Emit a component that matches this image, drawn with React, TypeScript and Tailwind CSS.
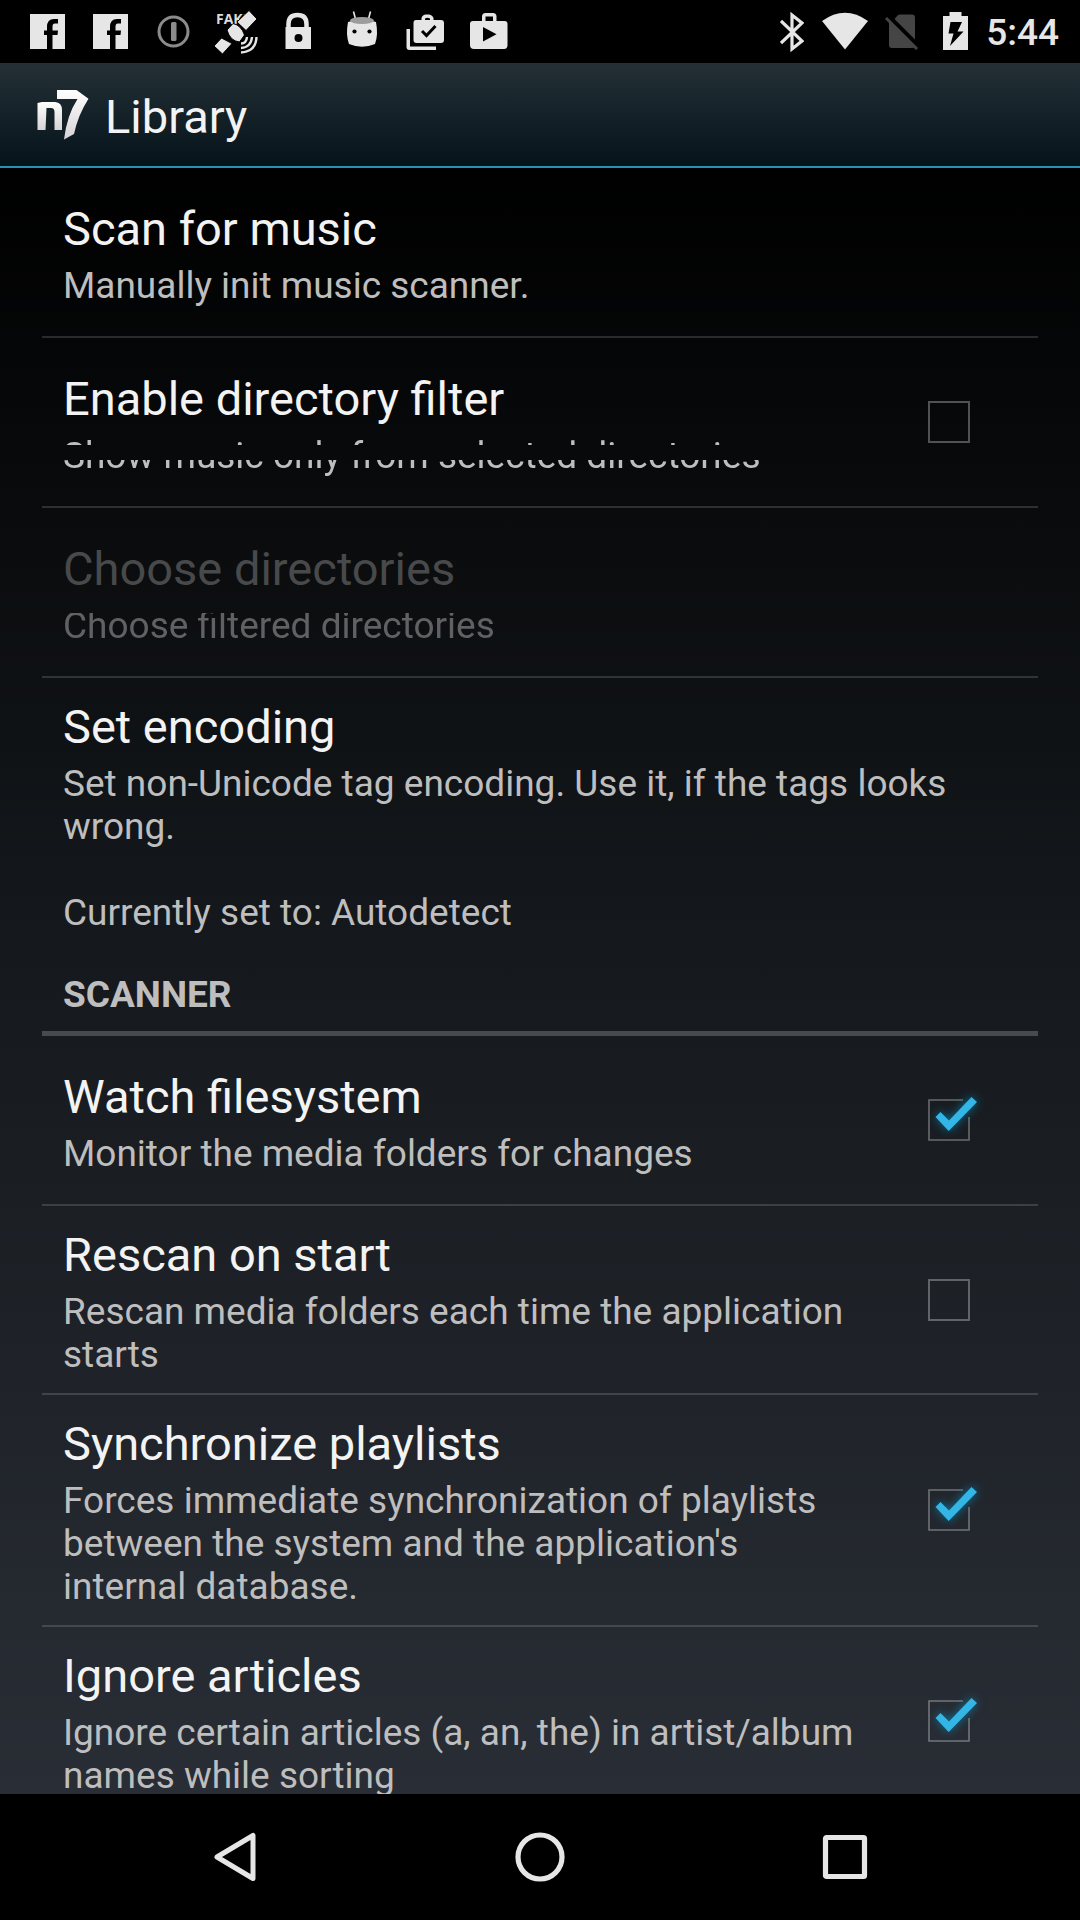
import { useId, type ReactNode } from "react";

type Pref = {
  title: string;
  summary: string;
  checked?: boolean;
  disabled?: boolean;
  summaryMask?: string;
  last?: boolean;
};

const general: Pref[] = [
  { title: "Scan for music", summary: "Manually init music scanner." },
  {
    title: "Enable directory filter",
    summary: "Show music only from selected directories",
    checked: false,
    summaryMask:
      "[mask-image:linear-gradient(to_bottom,black_11px,transparent_11px,transparent_26px,black_26px)]",
  },
  {
    title: "Choose directories",
    summary: "Choose filtered directories",
    disabled: true,
    summaryMask: "[mask-image:linear-gradient(to_bottom,transparent_9px,black_9px)]",
  },
  {
    title: "Set encoding",
    summary:
      "Set non-Unicode tag encoding. Use it, if the tags looks wrong.\n\nCurrently set to: Autodetect",
    last: true,
  },
];

const scanner: Pref[] = [
  { title: "Watch filesystem", summary: "Monitor the media folders for changes", checked: true },
  {
    title: "Rescan on start",
    summary: "Rescan media folders each time the application starts",
    checked: false,
  },
  {
    title: "Synchronize playlists",
    summary:
      "Forces immediate synchronization of playlists between the system and the application's internal database.",
    checked: true,
  },
  {
    title: "Ignore articles",
    summary: "Ignore certain articles (a, an, the) in artist/album names while sorting",
    checked: true,
    last: true,
  },
];

function CheckBox({ id, checked }: { id: string; checked: boolean }) {
  return (
    <span className="relative block size-[42px]">
      <input
        id={id}
        type="checkbox"
        defaultChecked={checked}
        className="peer block size-[42px] appearance-none border-2 border-white/30 checked:border-transparent"
      />
      <svg
        viewBox="0 0 42 42"
        aria-hidden="true"
        className="pointer-events-none absolute inset-0 hidden size-[42px] overflow-visible peer-checked:block"
      >
        <path d="M35 1H1V41H41V18" fill="none" stroke="#fff" strokeOpacity=".35" strokeWidth="1.6" />
        <path
          d="M7.5 18L12.5 13L21 21.5L43.5 -2L49 3L20.7 32Z"
          fill="#33b5e5"
          className="[filter:drop-shadow(0_0_5px_rgba(0,153,204,0.7))]"
        />
      </svg>
    </span>
  );
}

function PrefRow({ pref }: { pref: Pref }) {
  const id = useId();
  const text = (
    <>
      <span
        className={`block text-[47px] leading-[55px] ${pref.disabled ? "text-[#48494a]" : "text-[#f3f3f3]"}`}
      >
        {pref.title}
      </span>
      <span
        className={`mt-2 block whitespace-pre-line text-[37px] leading-[43px] ${pref.disabled ? "text-[#606163]" : "text-[#bebebe]"} ${pref.summaryMask ?? ""}`}
      >
        {pref.summary}
      </span>
    </>
  );
  const textBox = "block min-w-0 flex-1 pt-[21px] pb-[17px] text-left";
  return (
    <li
      className={`flex min-h-[170px] items-center pl-[21px] ${pref.last ? "" : "border-b-2 border-white/15"}`}
    >
      {pref.checked === undefined ? (
        <button type="button" disabled={pref.disabled} className={`${textBox} pr-[21px]`}>
          {text}
        </button>
      ) : (
        <>
          <label htmlFor={id} className={textBox}>
            {text}
          </label>
          <div className="flex w-[178px] shrink-0 justify-center">
            <CheckBox id={id} checked={pref.checked} />
          </div>
        </>
      )}
    </li>
  );
}

function Cell({ children }: { children: ReactNode }) {
  return (
    <svg viewBox="0 0 63 63" aria-hidden="true" className="size-[63px] shrink-0" fill="#e6e6e6">
      {children}
    </svg>
  );
}

function Facebook() {
  return (
    <Cell>
      <rect x="14" y="14" width="35" height="35" />
      <path
        d="M31 50V35H28V30.500H31V27Q31 19 38 19H42V23.500H39Q36.500 23.500 36.500 26.500V30.500H42L41.500 35H36.500V50Z"
        fill="#000"
      />
    </Cell>
  );
}

function StatusBar() {
  return (
    <div className="flex h-[63px] shrink-0 items-center justify-between bg-black pr-[21px] pl-[16px]">
      <div className="flex">
        <Facebook />
        <Facebook />
        <Cell>
          <circle cx="31.5" cy="31.500" r="14.500" fill="none" stroke="#8b8b8b" strokeWidth="3" />
          <rect x="29" y="22" width="5.500" height="19" rx="1.500" fill="#8b8b8b" />
        </Cell>
        <Cell>
          <text x="11" y="23.500" fontSize="14" fontWeight="700" fontFamily="Open Sans" fill="#dcdcdc">
            FAKE
          </text>
          <path
            stroke="#000"
            strokeWidth="1"
            d="M9 46L16.500 38L27 43.500L17.500 54Z M32 22L44 10.500L52 19L41 30.500Z M22 30L28 23.500Q36 25 39.500 35L34.500 42Q25 41 22 30Z"
          />
          <path
            d="M36 43.500Q41.500 43.500 42 37M36 48Q46 47.500 47 37M36 52.500Q51 51.500 51.500 37"
            fill="none"
            stroke="#e6e6e6"
            strokeWidth="2.400"
          />
        </Cell>
        <Cell>
          <path d="M20.500 28V24Q20.500 15 29.500 15Q38.500 15 38.500 24V28" fill="none" stroke="#e6e6e6" strokeWidth="4.500" />
          <path
            fillRule="evenodd"
            d="M17.500 27H43V49H17.500ZM26.500 38A4 4 0 1 0 34.500 38A4 4 0 1 0 26.500 38Z"
          />
        </Cell>
        <Cell>
          <path d="M22.500 11.500L24.500 19M39.500 11.500L37.500 19" stroke="#e6e6e6" strokeWidth="1.600" />
          <path d="M17 22Q31 17 45 22Q47.500 35 44 44Q31 49.500 18 44Q14.500 35 17 22Z" />
          <ellipse cx="31" cy="20.500" rx="12" ry="3.500" fill="#9c9c9c" />
          <circle cx="23.500" cy="31.500" r="2.100" fill="#000" />
          <circle cx="38.500" cy="31.500" r="2.100" fill="#000" />
        </Cell>
        <Cell>
          <path d="M12.500 29V47Q12.500 50 15.500 50H42V46.500H16V29Z" />
          <path
            fillRule="evenodd"
            d="M22 20H27.500V18Q28.500 14.500 32 14.500H35Q38.500 15 39.500 18V20H47Q50 20 50 23V40Q50 43 47 43H22.500Q19.500 43 19.500 40V23Q19.500 20 22 20ZM31 20H36V18.500Q33.500 17 31 18.500Z"
          />
          <path d="M28 31L32.500 35.500L41.500 26" fill="none" stroke="#000" strokeWidth="3" />
        </Cell>
        <Cell>
          <path
            fillRule="evenodd"
            d="M16 21H25V16Q25.500 13 28.500 13H36Q39 13 39.500 16V21H47.500Q50.500 21 50.500 24V45Q50.500 49 47 49H17Q13 49 13 45V24Q13 21 16 21ZM28.500 21H36V16.500H28.500ZM26 27V41.500L39.500 34.200Z"
          />
        </Cell>
      </div>
      <div className="flex items-center">
        <svg viewBox="0 0 24 63" aria-hidden="true" className="h-[63px] w-[24px]">
          <path d="M1 21L22 41L12 49V15L22 23L1 43" fill="none" stroke="#e6e6e6" strokeWidth="3.200" />
        </svg>
        <svg viewBox="0 0 46 63" aria-hidden="true" className="ml-[18px] h-[63px] w-[46px]">
          <path d="M0 21Q23 4.500 46 21L23 49.500Z" fill="#e6e6e6" />
        </svg>
        <svg viewBox="0 0 34 63" aria-hidden="true" className="ml-[17px] h-[63px] w-[34px]">
          <path d="M9.500 19L13 15Q14 14.500 15 14.500H27Q30 14.500 30 17.500V39.500ZM4 21L30 47Q29 48 27 48H7Q4 48 4 45Z" fill="#454545" />
          <path d="M1 18L32 49" stroke="#454545" strokeWidth="3" />
        </svg>
        <svg viewBox="0 0 25 63" aria-hidden="true" className="ml-[24px] h-[63px] w-[25px]">
          <path
            fillRule="evenodd"
            d="M0 16H6.500V12H18.500V16H25V50H0ZM7.500 22L5.500 33.500H10.500L7 46L20.500 31.500H14.500L19 22Z"
            fill="#e6e6e6"
          />
        </svg>
        <span className="ml-[18px] pt-[2px] text-[37px] leading-[43px] font-medium text-[#e6e6e6]">5:44</span>
      </div>
    </div>
  );
}

function N7Logo() {
  return (
    <svg viewBox="0 0 52 50" role="img" aria-label="n7" className="h-[50px] w-[52px]">
      <defs>
        <linearGradient id="n7" x1="0" y1="0" x2="0" y2="1">
          <stop offset="0" stopColor="#fff" />
          <stop offset="1" stopColor="#d6d2d6" />
        </linearGradient>
      </defs>
      <path
        d="M.5 13L5 12H18Q25 12.500 25 20V40H17.500V22Q17.500 18 14 18H9.500L8.500 40H.5Z"
        fill="url(#n7)"
      />
      <path d="M20 0H39.500L51.500 8.700Q41 25 37 44L27 49.500Q30 25 40.500 9H20Z" fill="url(#n7)" />
    </svg>
  );
}

function NavBar() {
  const button = "flex w-[28.2%] items-center justify-center";
  return (
    <nav className="flex h-[126px] shrink-0 justify-center bg-black">
      <button type="button" aria-label="Back" className={button}>
        <svg viewBox="0 0 50 50" className="size-[50px]" fill="none" stroke="#e6e6e6">
          <path d="M7 25L43 3.500V46.500Z" strokeWidth="5" strokeLinejoin="round" />
        </svg>
      </button>
      <button type="button" aria-label="Home" className={button}>
        <svg viewBox="0 0 50 50" className="size-[50px]" fill="none" stroke="#e6e6e6">
          <circle cx="25" cy="25" r="22" strokeWidth="5.200" />
        </svg>
      </button>
      <button type="button" aria-label="Recent apps" className={button}>
        <svg viewBox="0 0 50 50" className="size-[50px]" fill="none" stroke="#e6e6e6">
          <rect x="5.500" y="5.500" width="39" height="39" rx="1" strokeWidth="5.200" />
        </svg>
      </button>
    </nav>
  );
}

export default function App() {
  return (
    <div className="flex h-screen flex-col bg-black font-[Roboto,sans-serif]">
      <StatusBar />
      <header className="flex h-[105px] shrink-0 items-center border-b-2 border-[#2a8fb5] bg-linear-to-b/srgb from-[#243036] to-[#05131a] pl-[37px]">
        <N7Logo />
        <h1 className="ml-[16px] pt-1 text-[47px] leading-[55px] text-[#f3f3f3]">Library</h1>
      </header>
      <main className="min-h-0 flex-1 overflow-y-auto bg-linear-to-b/srgb from-black via-[#15191d] via-48% to-[#292d35] px-[42px] [scrollbar-width:none]">
        <ul>
          {general.map((p) => (
            <PrefRow key={p.title} pref={p} />
          ))}
        </ul>
        <h2 className="border-b-[5px] border-[#484b4e] pt-[22px] pb-[15px] pl-[21px] text-[37px] leading-[43px] font-bold text-[#bebebe]">
          SCANNER
        </h2>
        <ul>
          {scanner.map((p) => (
            <PrefRow key={p.title} pref={p} />
          ))}
        </ul>
      </main>
      <NavBar />
    </div>
  );
}
